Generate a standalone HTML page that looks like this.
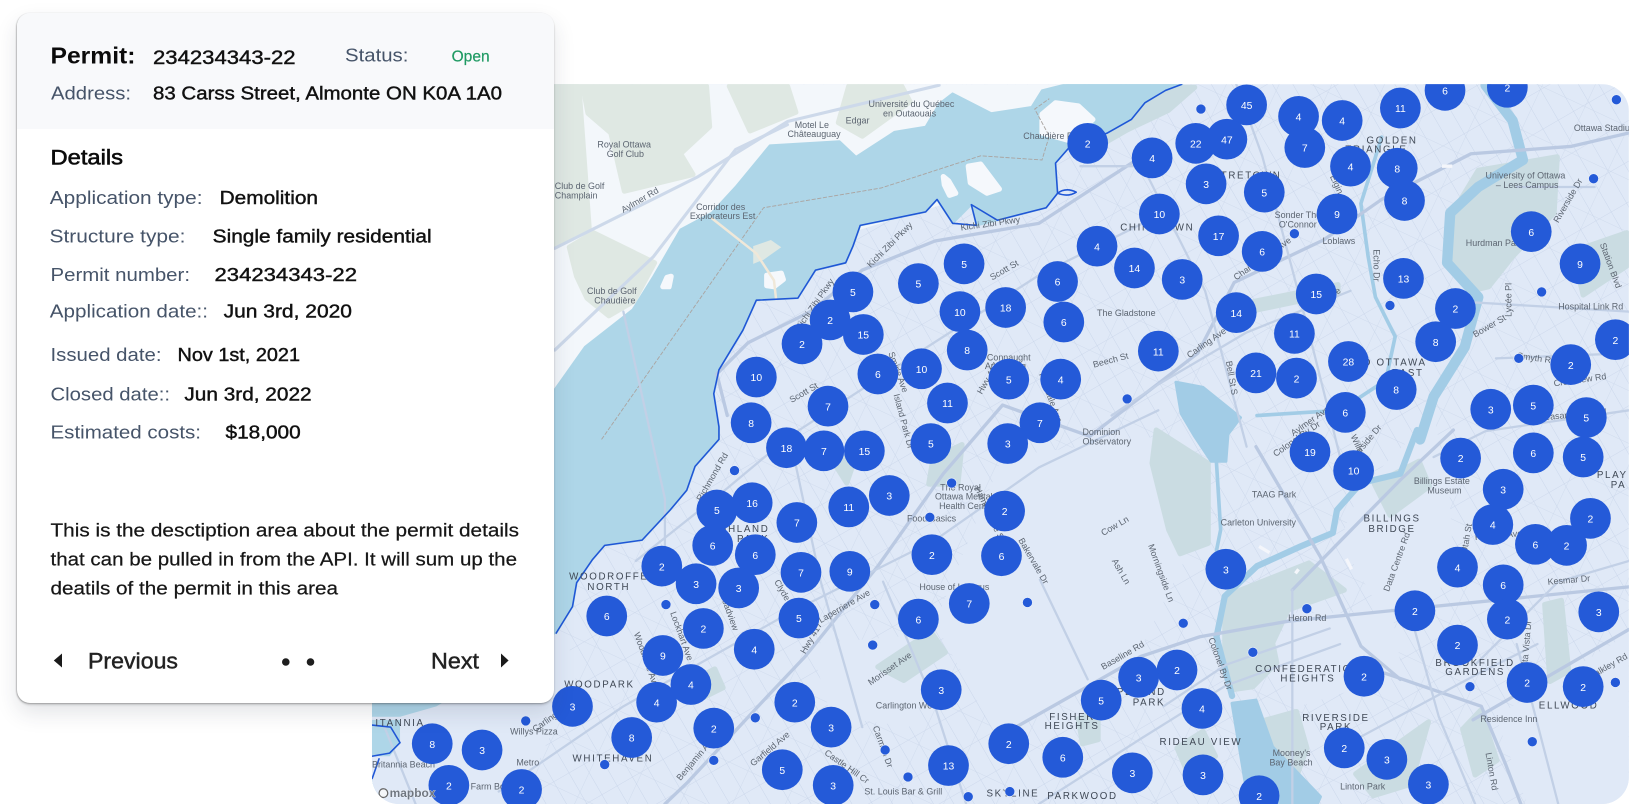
<!DOCTYPE html>
<html lang="en"><head><meta charset="utf-8"><title>Permit map</title>
<style>
html,body{margin:0;padding:0;background:#fff;width:1629px;height:804px;overflow:hidden}
svg{position:absolute;left:0;top:0;display:block}
#map{font-family:"Liberation Sans",sans-serif}
.l text{font-size:8.6px;fill:#5c6571}
.h text{font-size:9.4px;fill:#3f4855;letter-spacing:1.6px;text-anchor:middle}
.c circle{fill:#245ad8}
.c text{fill:#fff;font-size:10px;text-anchor:middle}
.d circle{fill:#245ad8;stroke:#e8eefa;stroke-width:.6}
.soft *{stroke-linejoin:round;stroke-width:5px}
#card{position:absolute;left:17px;top:12.5px;width:537px;height:690px;background:#fff;border-radius:13px;box-shadow:-.5px .5px 1.5px rgba(40,40,40,.38),0 2px 2px rgba(40,40,40,.16),0 10px 22px rgba(40,50,70,.13);overflow:hidden}
#card .top{height:116.5px;background:#f8f9fb}
#txt{font-family:"Liberation Sans",sans-serif}
#txt .k{fill:#465469;font-size:18.5px}
#txt .v{fill:#111;font-size:18.5px;stroke:#111;stroke-width:.42px}
</style></head><body>
<svg id="map" width="1629" height="804" viewBox="0 0 1568 774" xmlns="http://www.w3.org/2000/svg">
<defs>
<clipPath id="mc"><rect x="358" y="81" width="1210" height="693" rx="26"/></clipPath>
<pattern id="g1" width="17" height="34" patternUnits="userSpaceOnUse" patternTransform="rotate(-30)"><path d="M0 0V34M0 0H17" stroke="#c7d4e9" stroke-width=".8" fill="none"/></pattern>
<pattern id="g2" width="46" height="46" patternUnits="userSpaceOnUse" patternTransform="rotate(25)"><path d="M0 0V46M0 0H46" stroke="#cbd7ea" stroke-width=".7" fill="none"/></pattern>
</defs>
<g clip-path="url(#mc)">
<rect x="358" y="81" width="1210" height="693" fill="#e0e9f7"/>
<rect x="358" y="81" width="1210" height="693" fill="url(#g1)"/>
<rect x="358" y="81" width="1210" height="693" fill="url(#g2)"/>
<!-- cleared areas -->
<g fill="#e0e9f7">
<polygon points="965,440 1115,420 1140,540 1090,640 960,710 900,600"/>
<polygon points="1240,590 1340,590 1350,650 1250,680 1225,640"/>
<polygon points="1380,400 1310,470 1290,520 1330,590 1400,560 1395,470"/>
<polygon points="1440,690 1568,610 1568,774 1470,774"/>
<polygon points="780,620 900,610 880,700 800,690"/>
</g>
<!-- ontario greens -->
<g class="soft" fill="#cadce2" stroke="#cadce2">
<polygon points="1113,414 1163,446 1163,523 1136,533 1125,510 1109,446"/>
<polygon points="1179,574 1260,542 1294,568 1240,587 1225,619 1229,638 1206,661 1186,664 1179,626"/>
<polygon points="1423,164 1499,151 1496,205 1456,247 1433,276 1420,279 1393,247 1400,202"/>
<polygon points="1035,140 1066,128 1100,103 1130,84 1150,84 1125,106 1085,125 1045,148"/>
<polygon points="1212,695 1248,685 1258,720 1240,770 1208,770"/>
<polygon points="1305,745 1375,695 1358,755 1322,766"/>
<polygon points="1425,684 1441,732 1420,746 1408,702"/>
<polygon points="1487,582 1503,578 1510,646 1492,656"/>
<polygon points="845,642 896,608 910,628 870,655"/>
<polygon points="658,660 688,644 696,662 668,676"/>
<polygon points="803,446 826,433 815,465"/>
<polygon points="898,442 926,428 922,466 894,466"/>
<polygon points="1133,720 1158,704 1170,728 1142,741"/>
<polygon points="1038,692 1057,684 1057,712 1042,716"/>
<polygon points="468,720 497,704 506,727 474,736"/>
<polygon points="1198,292 1288,274 1288,282 1202,300"/>
<polygon points="1323,466 1366,444 1376,468 1338,496"/>
<polygon points="1514,242 1566,224 1566,256 1524,284"/>
</g>
<!-- Quebec -->
<polygon fill="#f3f7fb" points="358,81 1030,81 1003,120 930,190 700,260 560,400 358,560"/>
<g class="soft" fill="#dfe8e3" stroke="#dfe8e3">
<polygon points="561,83 680,83 683,122 655,148 667,168 601,184 588,128 566,109"/>
<polygon points="534,81 557,81 567,219 534,238"/>
<polygon points="548,238 571,224 630,253 610,290 586,304 565,287 555,266"/>
<polygon points="702,83 758,83 766,108 722,126"/>
<polygon points="817,83 868,83 876,98 830,131 807,118"/>
</g>
<!-- river -->
<polygon fill="#aed6e8" stroke="#aed6e8" stroke-linejoin="round" stroke-width="2" points="358,774 358,560 534,375 563,334 609,298 629,266 655,221 685,205 708,180 741,140 808,136 824,151 861,127 891,122 904,100 917,90 954,109 993,103 1003,87 1027,81 1138,81 1122,87 1102,99 1089,115 1066,128 1030,141 1016,157 1018,186 1007,200 960,212 940,217 935,197 917,215 902,192 891,204 828,217 821,237 814,253 785,260 768,287 728,289 715,318 692,356 687,379 692,411 692,423 669,449 661,472 645,491 618,520 582,525 570,539 555,561 551,584 535,610 500,650 420,700"/>
<polygon fill="#e0e9f7" points="358,690 358,774 500,774 560,640 535,610 420,680 385,690"/>
<polygon fill="#aed6e8" points="358,693 385,693 385,715 375,728 358,728"/>
<g class="soft" fill="#f5f8fc" stroke="#f5f8fc">
<polygon points="1003,110 1016,99 1038,102 1052,115 1038,128 1028,135 1003,128"/>
<polygon points="932,160 944,158 962,182 950,186 934,176"/>
<polygon points="908,170 913,174 920,186 914,188 909,178"/>
<polygon points="738,265 752,263 754,269 745,276 738,275"/>
<polygon points="642,267 646,266 644,276 638,276"/>
</g>
<polygon fill="#dfe8e3" points="725,237 742,231 752,238 735,250 725,254"/>
<!-- boundary -->
<polyline fill="none" stroke="#aaa5a2" stroke-width=".9" stroke-dasharray="4 1.5" points="579,423 735,200 848,181 944,150 1003,154 1010,131 996,105 1010,95"/>
<!-- rideau -->
<g fill="none" stroke-linejoin="round" stroke-linecap="round" stroke="#a2cce6">
<polyline stroke-width="10" points="1430,82 1456,116 1466,154 1423,180 1396,205 1393,253 1423,286 1410,334 1380,382 1367,423"/>
<polyline stroke-width="6" points="1364,414 1348,456 1310,465 1287,491 1283,513 1252,526 1210,545 1179,574 1171,613 1186,670"/>
<polyline stroke-width="3.5" points="1330,132 1310,196 1317,247 1324,286 1343,324 1334,366 1290,395 1210,400"/>
<polyline stroke-width="3.5" points="1170,430 1175,510 1171,530"/>
</g>
<polygon fill="#a2cce6" stroke="#a2cce6" stroke-width="3" stroke-linejoin="round" points="1132,368 1158,373 1194,402 1182,418 1180,444 1166,444 1150,420 1137,398"/>
<polygon fill="#a2cce6" stroke="#a2cce6" stroke-width="3" stroke-linejoin="round" points="1186,677 1209,674 1225,719 1271,767 1268,774 1202,774 1194,725"/>
<!-- roads -->
<g fill="none" stroke-linecap="round" stroke-linejoin="round">
<g stroke="#cdd9ea" stroke-width="3">
<polyline points="534,239 672,170 758,117 904,82"/>
<polyline points="534,337 629,247 708,144 758,120"/>
</g>
<polyline stroke="#f0e8d9" stroke-width="2.4" points="685,210 728,244 745,270 747,288"/>
<g stroke="#bac9e2" stroke-width="3.2">
<polyline points="640,774 661,754 739,670 775,632 845,545 908,456 965,390 1049,420"/>
<polyline points="1049,420 1153,340 1188,272 1274,231 1330,192 1416,148 1512,141 1568,128"/>
<polyline points="962,709 1098,632 1155,613 1240,598 1348,587 1568,565"/>
<polyline points="1244,568 1291,520 1348,462 1399,414"/>
<polyline points="1209,430 1271,536 1310,622 1348,654"/>
<polyline points="1333,648 1426,680 1449,735 1464,774"/>
<polyline points="1418,693 1568,606"/>
<polyline points="700,400 690,360 720,330 780,300 830,260 900,232 1000,215 1100,150"/>
</g>
<g stroke="#c2d0e6" stroke-width="2.2">
<polyline points="480,762 600,680 760,590 900,520 1000,450 1115,395"/>
<polyline points="612,540 700,470 760,420 860,355 1000,265 1130,200"/>
<polyline points="1070,400 1115,370 1200,320 1300,280"/>
<polyline points="1190,81 1215,150 1260,320 1290,440"/>
<polyline points="1040,160 1100,160 1160,280 1200,430"/>
<polyline points="1380,440 1430,415 1568,395"/>
<polyline points="1440,345 1568,340"/>
<polyline points="1400,290 1568,300"/>
<polyline points="1420,640 1500,560 1568,540"/>
<polyline points="1120,680 1180,640 1280,605"/>
<polyline points="1001,558 1047,654"/>
<polyline points="1244,568 1244,774"/>
<polyline points="1000,774 1100,710 1180,660 1290,620"/>
<polyline points="1290,720 1420,650 1480,620"/>
<polyline points="1360,600 1385,690 1420,774"/>
<polyline points="1460,620 1500,774"/>
<polyline points="1460,180 1535,180"/>
<polyline points="600,300 640,480 640,560"/>
<polyline points="370,700 400,774"/>
<polyline points="850,560 900,680 930,774"/>
<polyline points="760,420 790,560 830,700"/>
</g>
<g stroke="#f4f6fb" stroke-width="3.2" stroke-linecap="butt">
<path d="M1248 154h10M1388 160h10M1267 293l8-4M1250 548l-3 4M1212 526l10 6M1296 538l5 10"/>
</g>
</g>
<!-- blue border -->
<g fill="none" stroke="#1f56d6" stroke-width="1.5" stroke-linejoin="round">
<polyline points="535,610 551,584 555,561 570,539 582,525 618,520 645,491 661,472 669,449 692,423 692,411 687,379 692,356 715,318 728,289 768,287 785,260 814,253 821,237 828,217 891,204 902,192 917,215 940,217 935,197 960,212 1007,200 1018,186 1016,157 1030,141 1066,128 1089,115 1102,99 1122,87 1138,81"/>
<path d="M1018 186q8-6 18-1q-8 5-18 1z"/>
<polyline points="358,698 376,700 385,715 375,725 358,728"/>
<polyline points="365,730 358,750"/>
</g>
<!-- labels -->
<g class="l">
<text x="575" y="142">Royal Ottawa</text><text x="584" y="151">Golf Club</text>
<text x="534" y="182">Club de Golf</text><text x="534" y="191">Champlain</text>
<text x="565" y="283">Club de Golf</text><text x="572" y="292">Chaudière</text>
<text x="670" y="202">Corridor des</text><text x="664" y="211">Explorateurs Est</text>
<text x="765" y="123">Motel Le</text><text x="758" y="132">Châteauguay</text>
<text x="814" y="119">Edgar</text>
<text x="836" y="103">Université du Québec</text><text x="850" y="112">en Outaouais</text>
<text x="985" y="134">Chaudière Falls</text>
<text x="1430" y="172" font-size="9">University of Ottawa</text><text x="1440" y="181">– Lees Campus</text>
<text x="1515" y="126">Ottawa Stadium</text>
<text x="1411" y="237">Hurdman Park</text>
<text x="1227" y="210">Sonder The</text><text x="1231" y="219">O'Connor</text>
<text x="1273" y="235">Loblaws</text>
<text x="1056" y="304">The Gladstone</text>
<text x="950" y="347">Connaught</text><text x="948" y="355">Armstrong</text>
<text x="1042" y="419">Dominion</text><text x="1042" y="428">Observatory</text>
<text x="905" y="472">The Royal</text><text x="900" y="481">Ottawa Mental</text><text x="904" y="490">Health Centre</text>
<text x="873" y="502">Food Basics</text><text x="885" y="568">House of Lazarus</text>
<text x="843" y="682">Carlington Woods</text><text x="1205" y="479">TAAG Park</text><text x="1175" y="506">Carleton University</text>
<text x="1361" y="466">Billings Estate</text><text x="1374" y="475">Museum</text>
<text x="1225" y="728">Mooney's</text><text x="1222" y="737">Bay Beach</text><text x="1290" y="760">Linton Park</text>
<text x="1425" y="695">Residence Inn</text><text x="1240" y="598">Heron Rd</text>
<text x="491" y="707">Willys Pizza</text><text x="497" y="737">Metro</text><text x="453" y="760">Farm Boy</text>
<text x="358" y="739">Britannia Beach</text><text x="832" y="765">St. Louis Bar &amp; Grill</text>
<text x="1500" y="298">Hospital Link Rd</text>
<text transform="translate(600,205) rotate(-30)">Aylmer Rd</text>
<text transform="translate(770,318) rotate(-55)">Kichi Zibi Pkwy</text>
<text transform="translate(838,258) rotate(-45)">Kichi Zibi Pkwy</text>
<text transform="translate(925,222) rotate(-8)">Kichi Zibi Pkwy</text>
<text transform="translate(762,388) rotate(-30)">Scott St</text>
<text transform="translate(955,270) rotate(-30)">Scott St</text>
<text transform="translate(1145,345) rotate(-35)">Carling Ave</text>
<text transform="translate(1053,354) rotate(-15)">Beech St</text>
<text transform="translate(1190,270) rotate(-35)">Chamberlain Ave</text>
<text transform="translate(1264,300) rotate(-35)">Fifth Ave</text>
<text transform="translate(1180,348) rotate(80)">Bell St S</text>
<text transform="translate(1280,170) rotate(65)">Elgin St</text>
<text transform="translate(1322,240) rotate(90)">Echo Dr</text>
<text transform="translate(1455,305) rotate(-90)">Lycée Pl</text>
<text transform="translate(1500,215) rotate(-60)">Riverside Dr</text>
<text transform="translate(1540,235) rotate(70)">Station Blvd</text>
<text transform="translate(1420,325) rotate(-30)">Bower St</text>
<text transform="translate(1480,405) rotate(-5)">Pleasant Park Rd</text>
<text transform="translate(1496,372) rotate(-8)">Crestview Rd</text>
<text transform="translate(1460,345) rotate(8)">Smyth Rd</text>
<text transform="translate(1228,440) rotate(-35)">Colonel By Dr</text>
<text transform="translate(1245,420) rotate(-35)">Aylmer Ave</text>
<text transform="translate(1300,420) rotate(65)">Willard St</text>
<text transform="translate(1300,448) rotate(-50)">Riverside Dr</text>
<text transform="translate(1337,570) rotate(-70)">Data Centre Rd</text>
<text transform="translate(1070,540) rotate(60)">Ash Ln</text>
<text transform="translate(1105,525) rotate(70)">Morningside Ln</text>
<text transform="translate(1062,516) rotate(-30)">Cow Ln</text>
<text transform="translate(1062,645) rotate(-30)">Baseline Rd</text>
<text transform="translate(1163,615) rotate(70)">Colonel By Dr</text>
<text transform="translate(1470,645) rotate(-85)">Alta Vista Dr</text>
<text transform="translate(1530,655) rotate(-30)">Walkley Rd</text>
<text transform="translate(1412,533) rotate(-80)">Utah St</text>
<text transform="translate(1420,520) rotate(-5)">Randall Ave</text>
<text transform="translate(1490,563) rotate(-5)">Kesmar Dr</text>
<text transform="translate(980,520) rotate(60)">Bakervale Dr</text>
<text transform="translate(855,340) rotate(70)">Smirle Ave</text>
<text transform="translate(860,380) rotate(75)">Island Park Dr</text>
<text transform="translate(945,380) rotate(-60)">Hwy 417</text>
<text transform="translate(775,630) rotate(-60)">Hwy 417</text>
<text transform="translate(745,560) rotate(60)">Clyde Ave N</text>
<text transform="translate(790,600) rotate(-30)">Laperriere Ave</text>
<text transform="translate(838,660) rotate(-35)">Morisset Ave</text>
<text transform="translate(692,570) rotate(70)">Broadview</text>
<text transform="translate(645,590) rotate(70)">Lockhart Ave</text>
<text transform="translate(610,610) rotate(70)">Woodroffe Ave</text>
<text transform="translate(515,705) rotate(-35)">Carling Ave</text>
<text transform="translate(725,738) rotate(-40)">Garfield Ave</text>
<text transform="translate(655,752) rotate(-50)">Benjamin Ave</text>
<text transform="translate(793,726) rotate(35)">Castle Hill Cr</text>
<text transform="translate(840,700) rotate(70)">Carmen Dr</text>
<text transform="translate(1430,725) rotate(80)">Linton Rd</text>
<text transform="translate(675,483) rotate(-60)">Richmond Rd</text>
<text transform="translate(938,470) rotate(65)">Hamner Ave S</text>
<text transform="translate(1000,360) rotate(70)">Parkdale Ave</text>
</g>
<g class="h">
<text x="1192" y="172">CENTRETOWN</text><text x="1114" y="222">CHINATOWN</text><text x="1340" y="138">GOLDEN</text><text x="1325" y="147">TRIANGLE</text>
<text x="1335" y="352">OLD OTTAWA</text><text x="1355" y="362">EAST</text>
<text x="1340" y="502">BILLINGS</text><text x="1340" y="512">BRIDGE</text>
<text x="710" y="512">HIGHLAND</text><text x="725" y="522">PARK</text>
<text x="586" y="558">WOODROFFE</text><text x="586" y="568">NORTH</text>
<text x="577" y="662">WOODPARK</text><text x="590" y="733">WHITEHAVEN</text>
<text x="385" y="699">ITANNIA</text>
<text x="1259" y="647">CONFEDERATION</text><text x="1259" y="656">HEIGHTS</text>
<text x="1090" y="669">COPELAND</text><text x="1106" y="679">PARK</text>
<text x="1032" y="693">FISHER</text><text x="1032" y="702">HEIGHTS</text>
<text x="1156" y="717">RIDEAU VIEW</text><text x="1286" y="694">RIVERSIDE</text><text x="1286" y="703">PARK</text>
<text x="1420" y="641">BROOKFIELD</text><text x="1420" y="650">GARDENS</text>
<text x="1510" y="682">ELLWOOD</text><text x="1042" y="769">PARKWOOD</text><text x="975" y="767">SKYLINE</text>
<text x="1552" y="460">PLAY</text><text x="1558" y="470">PA</text>
</g>
<!-- dots -->
<g class="d">
<circle cx="1156" cy="105" r="4.8"/><circle cx="1556" cy="96" r="4.8"/><circle cx="1534" cy="172" r="4.8"/><circle cx="1246" cy="225" r="4.8"/><circle cx="1484" cy="281" r="4.8"/><circle cx="1338" cy="294" r="4.8"/><circle cx="1462" cy="345" r="4.8"/><circle cx="1085" cy="384" r="4.8"/><circle cx="707" cy="453" r="4.8"/><circle cx="916" cy="465" r="4.8"/><circle cx="895" cy="498" r="4.8"/><circle cx="641" cy="582" r="4.8"/><circle cx="842" cy="582" r="4.8"/><circle cx="840" cy="621" r="4.8"/><circle cx="989" cy="580" r="4.8"/><circle cx="1139" cy="600" r="4.8"/><circle cx="1258" cy="586" r="4.8"/><circle cx="1206" cy="628" r="4.8"/><circle cx="1415" cy="661" r="4.8"/><circle cx="1555" cy="657" r="4.8"/><circle cx="1475" cy="714" r="4.8"/><circle cx="972" cy="762" r="4.8"/><circle cx="506" cy="694" r="4.8"/><circle cx="727" cy="691" r="4.8"/><circle cx="687" cy="732" r="4.8"/><circle cx="582" cy="736" r="4.8"/><circle cx="852" cy="722" r="4.8"/><circle cx="874" cy="748" r="4.8"/><circle cx="932" cy="767" r="4.8"/>
</g>
<!-- clusters -->
<g class="c">
<circle cx="1200" cy="101" r="19.6"/><text x="1200" y="105">45</text>
<circle cx="1250" cy="112" r="19.6"/><text x="1250" y="116">4</text>
<circle cx="1292" cy="116" r="19.6"/><text x="1292" y="120">4</text>
<circle cx="1348" cy="104" r="19.6"/><text x="1348" y="108">11</text>
<circle cx="1391" cy="87" r="19.6"/><text x="1391" y="91">6</text>
<circle cx="1451" cy="84" r="19.6"/><text x="1451" y="88">2</text>
<circle cx="1047" cy="138" r="19.6"/><text x="1047" y="142">2</text>
<circle cx="1109" cy="152" r="19.6"/><text x="1109" y="156">4</text>
<circle cx="1151" cy="138" r="19.6"/><text x="1151" y="142">22</text>
<circle cx="1181" cy="134" r="19.6"/><text x="1181" y="138">47</text>
<circle cx="1256" cy="142" r="19.6"/><text x="1256" y="146">7</text>
<circle cx="1300" cy="160" r="19.6"/><text x="1300" y="164">4</text>
<circle cx="1345" cy="162" r="19.6"/><text x="1345" y="166">8</text>
<circle cx="1352" cy="193" r="19.6"/><text x="1352" y="197">8</text>
<circle cx="1161" cy="177" r="19.6"/><text x="1161" y="181">3</text>
<circle cx="1217" cy="185" r="19.6"/><text x="1217" y="189">5</text>
<circle cx="1287" cy="206" r="19.6"/><text x="1287" y="210">9</text>
<circle cx="1116" cy="206" r="19.6"/><text x="1116" y="210">10</text>
<circle cx="1173" cy="227" r="19.6"/><text x="1173" y="231">17</text>
<circle cx="1215" cy="242" r="19.6"/><text x="1215" y="246">6</text>
<circle cx="1474" cy="223" r="19.6"/><text x="1474" y="227">6</text>
<circle cx="1521" cy="254" r="19.6"/><text x="1521" y="258">9</text>
<circle cx="1056" cy="237" r="19.6"/><text x="1056" y="241">4</text>
<circle cx="1092" cy="258" r="19.6"/><text x="1092" y="262">14</text>
<circle cx="1138" cy="269" r="19.6"/><text x="1138" y="273">3</text>
<circle cx="1351" cy="268" r="19.6"/><text x="1351" y="272">13</text>
<circle cx="1267" cy="283" r="19.6"/><text x="1267" y="287">15</text>
<circle cx="1190" cy="301" r="19.6"/><text x="1190" y="305">14</text>
<circle cx="1401" cy="297" r="19.6"/><text x="1401" y="301">2</text>
<circle cx="1555" cy="327" r="19.6"/><text x="1555" y="331">2</text>
<circle cx="928" cy="254" r="19.6"/><text x="928" y="258">5</text>
<circle cx="884" cy="273" r="19.6"/><text x="884" y="277">5</text>
<circle cx="1018" cy="271" r="19.6"/><text x="1018" y="275">6</text>
<circle cx="821" cy="281" r="19.6"/><text x="821" y="285">5</text>
<circle cx="968" cy="296" r="19.6"/><text x="968" y="300">18</text>
<circle cx="924" cy="300" r="19.6"/><text x="924" y="304">10</text>
<circle cx="1024" cy="310" r="19.6"/><text x="1024" y="314">6</text>
<circle cx="772" cy="331" r="19.6"/><text x="772" y="335">2</text>
<circle cx="799" cy="308" r="19.6"/><text x="799" y="312">2</text>
<circle cx="831" cy="322" r="19.6"/><text x="831" y="326">15</text>
<circle cx="1246" cy="321" r="19.6"/><text x="1246" y="325">11</text>
<circle cx="1382" cy="329" r="19.6"/><text x="1382" y="333">8</text>
<circle cx="1298" cy="348" r="19.6"/><text x="1298" y="352">28</text>
<circle cx="1115" cy="338" r="19.6"/><text x="1115" y="342">11</text>
<circle cx="931" cy="337" r="19.6"/><text x="931" y="341">8</text>
<circle cx="887" cy="355" r="19.6"/><text x="887" y="359">10</text>
<circle cx="845" cy="360" r="19.6"/><text x="845" y="364">6</text>
<circle cx="1209" cy="359" r="19.6"/><text x="1209" y="363">21</text>
<circle cx="1248" cy="364" r="19.6"/><text x="1248" y="368">2</text>
<circle cx="1512" cy="351" r="19.6"/><text x="1512" y="355">2</text>
<circle cx="971" cy="365" r="19.6"/><text x="971" y="369">5</text>
<circle cx="1021" cy="365" r="19.6"/><text x="1021" y="369">4</text>
<circle cx="728" cy="363" r="19.6"/><text x="728" y="367">10</text>
<circle cx="1344" cy="375" r="19.6"/><text x="1344" y="379">8</text>
<circle cx="912" cy="388" r="19.6"/><text x="912" y="392">11</text>
<circle cx="797" cy="391" r="19.6"/><text x="797" y="395">7</text>
<circle cx="1435" cy="394" r="19.6"/><text x="1435" y="398">3</text>
<circle cx="1476" cy="390" r="19.6"/><text x="1476" y="394">5</text>
<circle cx="1527" cy="402" r="19.6"/><text x="1527" y="406">5</text>
<circle cx="1295" cy="397" r="19.6"/><text x="1295" y="401">6</text>
<circle cx="723" cy="407" r="19.6"/><text x="723" y="411">8</text>
<circle cx="1001" cy="407" r="19.6"/><text x="1001" y="411">7</text>
<circle cx="970" cy="427" r="19.6"/><text x="970" y="431">3</text>
<circle cx="896" cy="427" r="19.6"/><text x="896" y="431">5</text>
<circle cx="757" cy="431" r="19.6"/><text x="757" y="435">18</text>
<circle cx="793" cy="434" r="19.6"/><text x="793" y="438">7</text>
<circle cx="832" cy="434" r="19.6"/><text x="832" y="438">15</text>
<circle cx="1261" cy="435" r="19.6"/><text x="1261" y="439">19</text>
<circle cx="1406" cy="441" r="19.6"/><text x="1406" y="445">2</text>
<circle cx="1476" cy="436" r="19.6"/><text x="1476" y="440">6</text>
<circle cx="1524" cy="440" r="19.6"/><text x="1524" y="444">5</text>
<circle cx="1303" cy="453" r="19.6"/><text x="1303" y="457">10</text>
<circle cx="856" cy="477" r="19.6"/><text x="856" y="481">3</text>
<circle cx="1447" cy="471" r="19.6"/><text x="1447" y="475">3</text>
<circle cx="817" cy="488" r="19.6"/><text x="817" y="492">11</text>
<circle cx="690" cy="491" r="19.6"/><text x="690" y="495">5</text>
<circle cx="724" cy="484" r="19.6"/><text x="724" y="488">16</text>
<circle cx="767" cy="503" r="19.6"/><text x="767" y="507">7</text>
<circle cx="967" cy="492" r="19.6"/><text x="967" y="496">2</text>
<circle cx="1437" cy="505" r="19.6"/><text x="1437" y="509">4</text>
<circle cx="1531" cy="499" r="19.6"/><text x="1531" y="503">2</text>
<circle cx="1508" cy="525" r="19.6"/><text x="1508" y="529">2</text>
<circle cx="1478" cy="524" r="19.6"/><text x="1478" y="528">6</text>
<circle cx="686" cy="525" r="19.6"/><text x="686" y="529">6</text>
<circle cx="727" cy="534" r="19.6"/><text x="727" y="538">6</text>
<circle cx="897" cy="534" r="19.6"/><text x="897" y="538">2</text>
<circle cx="964" cy="535" r="19.6"/><text x="964" y="539">6</text>
<circle cx="637" cy="545" r="19.6"/><text x="637" y="549">2</text>
<circle cx="771" cy="551" r="19.6"/><text x="771" y="555">7</text>
<circle cx="818" cy="550" r="19.6"/><text x="818" y="554">9</text>
<circle cx="1180" cy="548" r="19.6"/><text x="1180" y="552">3</text>
<circle cx="1403" cy="546" r="19.6"/><text x="1403" y="550">4</text>
<circle cx="670" cy="562" r="19.6"/><text x="670" y="566">3</text>
<circle cx="711" cy="566" r="19.6"/><text x="711" y="570">3</text>
<circle cx="1447" cy="563" r="19.6"/><text x="1447" y="567">6</text>
<circle cx="933" cy="581" r="19.6"/><text x="933" y="585">7</text>
<circle cx="584" cy="593" r="19.6"/><text x="584" y="597">6</text>
<circle cx="769" cy="595" r="19.6"/><text x="769" y="599">5</text>
<circle cx="884" cy="596" r="19.6"/><text x="884" y="600">6</text>
<circle cx="1362" cy="588" r="19.6"/><text x="1362" y="592">2</text>
<circle cx="1451" cy="596" r="19.6"/><text x="1451" y="600">2</text>
<circle cx="1539" cy="589" r="19.6"/><text x="1539" y="593">3</text>
<circle cx="677" cy="605" r="19.6"/><text x="677" y="609">2</text>
<circle cx="1403" cy="621" r="19.6"/><text x="1403" y="625">2</text>
<circle cx="726" cy="625" r="19.6"/><text x="726" y="629">4</text>
<circle cx="638" cy="631" r="19.6"/><text x="638" y="635">9</text>
<circle cx="1133" cy="645" r="19.6"/><text x="1133" y="649">2</text>
<circle cx="1096" cy="652" r="19.6"/><text x="1096" y="656">3</text>
<circle cx="1313" cy="651" r="19.6"/><text x="1313" y="655">2</text>
<circle cx="1470" cy="657" r="19.6"/><text x="1470" y="661">2</text>
<circle cx="1524" cy="661" r="19.6"/><text x="1524" y="665">2</text>
<circle cx="632" cy="676" r="19.6"/><text x="632" y="680">4</text>
<circle cx="665" cy="659" r="19.6"/><text x="665" y="663">4</text>
<circle cx="906" cy="664" r="19.6"/><text x="906" y="668">3</text>
<circle cx="551" cy="680" r="19.6"/><text x="551" y="684">3</text>
<circle cx="765" cy="676" r="19.6"/><text x="765" y="680">2</text>
<circle cx="1060" cy="674" r="19.6"/><text x="1060" y="678">5</text>
<circle cx="1157" cy="682" r="19.6"/><text x="1157" y="686">4</text>
<circle cx="687" cy="701" r="19.6"/><text x="687" y="705">2</text>
<circle cx="800" cy="700" r="19.6"/><text x="800" y="704">3</text>
<circle cx="608" cy="710" r="19.6"/><text x="608" y="714">8</text>
<circle cx="416" cy="716" r="19.6"/><text x="416" y="720">8</text>
<circle cx="464" cy="722" r="19.6"/><text x="464" y="726">3</text>
<circle cx="971" cy="716" r="19.6"/><text x="971" y="720">2</text>
<circle cx="1294" cy="720" r="19.6"/><text x="1294" y="724">2</text>
<circle cx="1335" cy="731" r="19.6"/><text x="1335" y="735">3</text>
<circle cx="1023" cy="729" r="19.6"/><text x="1023" y="733">6</text>
<circle cx="913" cy="737" r="19.6"/><text x="913" y="741">13</text>
<circle cx="1090" cy="744" r="19.6"/><text x="1090" y="748">3</text>
<circle cx="1158" cy="746" r="19.6"/><text x="1158" y="750">3</text>
<circle cx="753" cy="741" r="19.6"/><text x="753" y="745">5</text>
<circle cx="1375" cy="755" r="19.6"/><text x="1375" y="759">3</text>
<circle cx="802" cy="756" r="19.6"/><text x="802" y="760">3</text>
<circle cx="432" cy="756" r="19.6"/><text x="432" y="760">2</text>
<circle cx="502" cy="760" r="19.6"/><text x="502" y="764">2</text>
<circle cx="1212" cy="766" r="19.6"/><text x="1212" y="770">2</text>
</g>
<!-- mapbox -->
<circle cx="369" cy="763.5" r="4.2" fill="#f4f6f9" stroke="#666" stroke-width="1.2"/>
<text x="375" y="767.5" font-size="11.5" font-weight="bold" fill="#6f7680" stroke="#fff" stroke-width=".5" paint-order="stroke">mapbox</text>
</g>
</svg>
<div id="card"><div class="top"></div></div>
<svg id="txt" width="1629" height="804" xmlns="http://www.w3.org/2000/svg">
<text x="50.5" y="63.3" font-size="23" font-weight="bold" fill="#0b0b0b" textLength="85" lengthAdjust="spacingAndGlyphs">Permit:</text>
<text class="v" x="153" y="64" textLength="142.6" lengthAdjust="spacingAndGlyphs" style="font-size:19.5px">234234343-22</text>
<text class="k" x="345" y="61.7" textLength="63.4" lengthAdjust="spacingAndGlyphs">Status:</text>
<text x="451.6" y="61.7" font-size="15.5" fill="#1f9a63" stroke="#1f9a63" stroke-width=".2" textLength="38" lengthAdjust="spacingAndGlyphs">Open</text>
<text class="k" x="51" y="99.3" textLength="80" lengthAdjust="spacingAndGlyphs">Address:</text>
<text class="v" x="153" y="99.3" textLength="349" lengthAdjust="spacingAndGlyphs">83 Carss Street, Almonte ON K0A 1A0</text>
<text x="50.5" y="164.7" font-size="21" fill="#0b0b0b" stroke="#0b0b0b" stroke-width=".6" textLength="72.5" lengthAdjust="spacingAndGlyphs">Details</text>
<text class="k" x="49.8" y="204" textLength="152.7" lengthAdjust="spacingAndGlyphs">Application type:</text>
<text class="v" x="219.6" y="204" textLength="98.4" lengthAdjust="spacingAndGlyphs">Demolition</text>
<text class="k" x="49.5" y="242.7" textLength="136" lengthAdjust="spacingAndGlyphs">Structure type:</text>
<text class="v" x="212.7" y="242.7" textLength="218.9" lengthAdjust="spacingAndGlyphs">Single family residential</text>
<text class="k" x="50.5" y="281" textLength="139.5" lengthAdjust="spacingAndGlyphs">Permit number:</text>
<text class="v" x="214.5" y="281" textLength="142.5" lengthAdjust="spacingAndGlyphs">234234343-22</text>
<text class="k" x="49.8" y="317.3" textLength="158.2" lengthAdjust="spacingAndGlyphs">Application date::</text>
<text class="v" x="223.6" y="317.3" textLength="128.4" lengthAdjust="spacingAndGlyphs">Jun 3rd, 2020</text>
<text class="k" x="50.5" y="361" textLength="111" lengthAdjust="spacingAndGlyphs">Issued date:</text>
<text class="v" x="177.5" y="361" textLength="122.5" lengthAdjust="spacingAndGlyphs">Nov 1st, 2021</text>
<text class="k" x="50.5" y="400.3" textLength="119.5" lengthAdjust="spacingAndGlyphs">Closed date::</text>
<text class="v" x="184.4" y="400.3" textLength="127.2" lengthAdjust="spacingAndGlyphs">Jun 3rd, 2022</text>
<text class="k" x="50.5" y="438.7" textLength="150.5" lengthAdjust="spacingAndGlyphs">Estimated costs:</text>
<text class="v" x="225.5" y="438.7" textLength="75.2" lengthAdjust="spacingAndGlyphs">$18,000</text>
<text x="50.5" y="536.7" font-size="18.5" fill="#161616" stroke="#161616" stroke-width=".22" textLength="468.5" lengthAdjust="spacingAndGlyphs">This is the desctiption area about the permit details</text>
<text x="50.5" y="565.7" font-size="18.5" fill="#161616" stroke="#161616" stroke-width=".22" textLength="466.5" lengthAdjust="spacingAndGlyphs">that can be pulled in from the API. It will sum up the</text>
<text x="50.5" y="594.3" font-size="18.5" fill="#161616" stroke="#161616" stroke-width=".22" textLength="287.5" lengthAdjust="spacingAndGlyphs">deatils of the permit in this area</text>
<text x="88" y="668.3" font-size="22.5" fill="#222" stroke="#222" stroke-width=".45" textLength="90" lengthAdjust="spacingAndGlyphs">Previous</text>
<text x="431" y="668.3" font-size="22.5" fill="#222" stroke="#222" stroke-width=".45" textLength="48" lengthAdjust="spacingAndGlyphs">Next</text>
<path d="M62 653.5V667.5L53.8 660.5Z" fill="#1a1a1a"/>
<path d="M501 653.5V667.5L508.6 660.5Z" fill="#1a1a1a"/>
<circle cx="285.8" cy="662" r="3.8" fill="#1e1e1e"/>
<circle cx="310.5" cy="662" r="3.8" fill="#1e1e1e"/>
</svg>
</body></html>
